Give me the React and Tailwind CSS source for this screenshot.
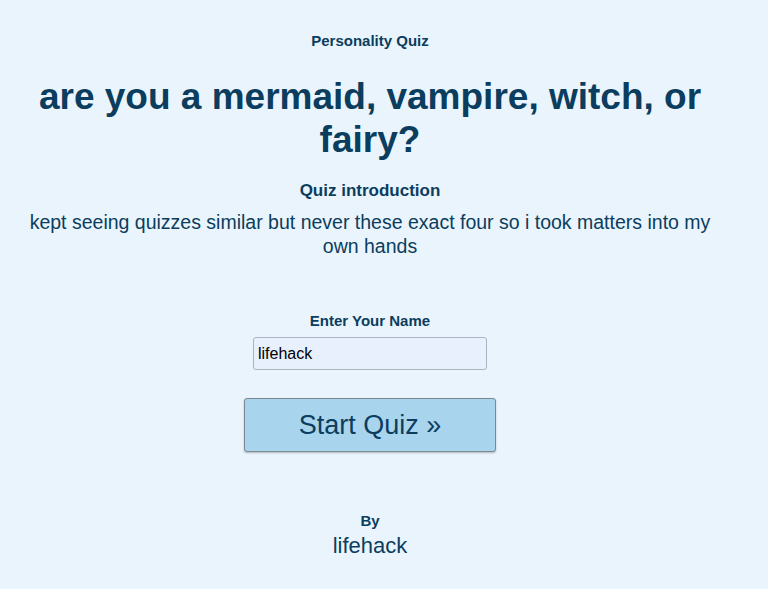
export default function App() {
  return (
    <div className="min-h-[589px] w-full bg-[#eaf4fc] text-[#0b3d5e]" style={{ fontFamily: '"Liberation Sans", Arial, sans-serif' }}>
      <div className="w-[740px] flex flex-col items-center text-center">
        <div className="mt-[32px] text-[15px] font-bold leading-[18px]">Personality Quiz</div>
        <h1 className="mt-[25px] px-[30px] text-[37px] font-bold leading-[43px]">are you a mermaid, vampire, witch, or fairy?</h1>
        <div className="mt-[20px] text-[17px] font-bold leading-[20px]">Quiz introduction</div>
        <p className="mt-[9px] px-[20px] text-[19.5px] leading-[24px]">kept seeing quizzes similar but never these exact four so i took matters into my own hands</p>
        <div className="mt-[54px] text-[15px] font-bold leading-[18px]">Enter Your Name</div>
        <input
          defaultValue="lifehack"
          className="mt-[7px] w-[234px] h-[33px] rounded-[3px] border border-[#a9b4bf] bg-[#e8f0fe] px-[4px] text-[16px] text-black outline-none"
          style={{ fontFamily: '"Liberation Sans", Arial, sans-serif' }}
        />
        <button
          className="mt-[28px] w-[252px] h-[54px] rounded-[3px] border border-[#7d8a94] bg-[#a8d4ee] text-[27px] text-[#0b3d5e] shadow-[0_1px_2px_rgba(0,0,0,0.25)]"
          style={{ fontFamily: '"Liberation Sans", Arial, sans-serif' }}
        >
          Start Quiz »
        </button>
        <div className="mt-[60px] text-[15px] font-bold leading-[18px]">By</div>
        <div className="mt-[3px] text-[22px] leading-[26px]">lifehack</div>
      </div>
    </div>
  );
}
